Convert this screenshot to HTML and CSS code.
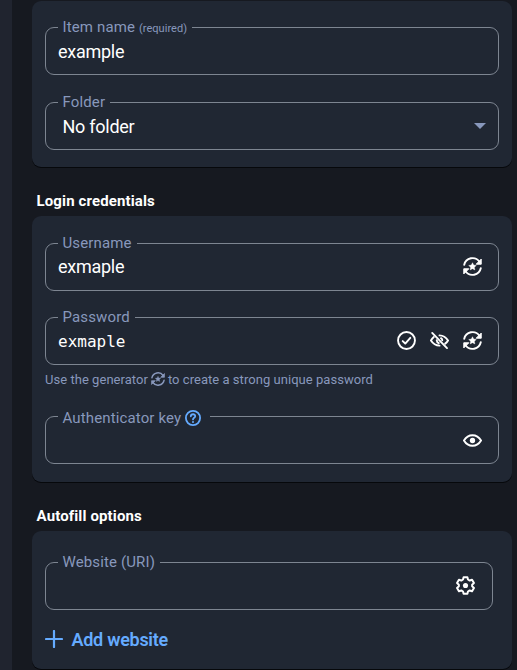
FILE: index.html
```html
<!DOCTYPE html>
<html lang="en">
<head>
<meta charset="utf-8">
<title>Edit login</title>
<link rel="stylesheet" href="styles.css">
</head>
<body>
<svg class="sprite" aria-hidden="true">
  <symbol id="generate" viewBox="0 0 20 20">
    <path d="M1.3 8.2A8.9 8.9 0 0 1 17.3 5M18.7 11.8A8.9 8.9 0 0 1 2.7 15" fill="none" stroke="currentColor" stroke-width="2" stroke-linecap="round"/>
    <path d="M19.2 2.2V7.6H13.8ZM.8 17.8V12.4H6.2Z" fill="currentColor" stroke="currentColor" stroke-width="1" stroke-linejoin="round"/>
    <path d="M10 6l1.25 2.5 2.75.4-2 1.95.48 2.75L10 12.3l-2.48 1.3L8 10.85 6 8.9l2.75-.4Z" fill="currentColor" stroke="currentColor" stroke-width=".4"/>
  </symbol>
  <symbol id="check" viewBox="0 0 20 20">
    <g fill="none" stroke="currentColor" stroke-width="2" stroke-linecap="round" stroke-linejoin="round"><circle cx="10" cy="10" r="8.9"/><path d="M6 10.6l2.7 2.6 5.3-6"/></g>
  </symbol>
  <symbol id="eye" viewBox="0 0 20 20">
    <path d="M1 10C5.4 2.6 14.6 2.6 19 10C14.6 17.4 5.4 17.4 1 10Z" fill="none" stroke="currentColor" stroke-width="2" stroke-linejoin="round"/><circle cx="10" cy="10" r="2.8" fill="currentColor"/>
  </symbol>
  <symbol id="eye-off" viewBox="0 0 20 20">
    <g fill="none" stroke="currentColor" stroke-width="2" stroke-linecap="round" stroke-linejoin="round"><path d="M2.3 2l15.6 16"/><path d="M4 6.4Q2.2 8 1 10Q4.3 15.2 10 15.4M10 4.6Q15.7 4.8 19 10Q17.8 12 16 13.3M7.1 9.6Q7.2 12 9.2 12.8M11.6 7.5Q13 8.3 12.9 9.8"/></g>
  </symbol>
  <symbol id="gear" viewBox="0 0 20 20">
    <path d="M8 1.2h4l.6 2.5 1.8 1.1 2.5-.8 2 3.4L17 9.1v1.8l1.9 1.7-2 3.4-2.5-.8-1.8 1.1-.6 2.5H8l-.6-2.5-1.8-1.1-2.5.8-2-3.4L3 10.9V9.1L1.1 7.4l2-3.4 2.5.8 1.8-1.1Z" fill="none" stroke="currentColor" stroke-width="2.1" stroke-linejoin="round"/><circle cx="10" cy="10" r="2.7" fill="currentColor"/>
  </symbol>
  <symbol id="help" viewBox="0 0 16 16">
    <g fill="none" stroke="currentColor" stroke-width="1.8" stroke-linecap="round"><circle cx="8" cy="8" r="7.1"/><path d="M5.8 6.3C5.9 3.5 10.3 3.6 10.2 6.2C10.1 7.8 8 7.7 8 9.4"/></g><circle cx="8" cy="11.9" r="1" fill="currentColor"/>
  </symbol>
  <symbol id="plus" viewBox="0 0 18 18">
    <path d="M9 1v16M1 9h16" stroke="currentColor" stroke-width="2.2" stroke-linecap="round"/>
  </symbol>
</svg>
<div class="page">
  <aside class="rail"></aside>
  <main class="content">
    <section class="panel panel-item">
      <div class="field">
        <label class="label">Item name <small>(required)</small></label>
        <span class="value">example</span>
      </div>
      <div class="field select">
        <label class="label">Folder</label>
        <span class="value">No folder</span>
        <span class="caret"></span>
      </div>
    </section>

    <h2>Login credentials</h2>
    <section class="panel panel-login">
      <div class="field username">
        <label class="label">Username</label>
        <span class="value">exmaple</span>
        <div class="actions"><svg><use href="#generate"/></svg></div>
      </div>
      <div class="field">
        <label class="label">Password</label>
        <span class="value mono">exmaple</span>
        <div class="actions"><svg><use href="#check"/></svg><svg><use href="#eye-off"/></svg><svg><use href="#generate"/></svg></div>
      </div>
      <p class="hint"><span>Use the generator</span><svg><use href="#generate"/></svg><span>to create a strong unique password</span></p>
      <div class="field authenticator">
        <label class="label label-help">Authenticator key <svg><use href="#help"/></svg></label>
        <div class="actions"><svg><use href="#eye"/></svg></div>
      </div>
    </section>

    <h2>Autofill options</h2>
    <section class="panel panel-autofill">
      <div class="field website">
        <label class="label">Website (URI)</label>
        <div class="actions"><svg><use href="#gear"/></svg></div>
      </div>
      <a class="add"><svg><use href="#plus"/></svg><span>Add website</span></a>
    </section>
  </main>
</div>
</body>
</html>
```
FILE: styles.css
```css
* { box-sizing: border-box; }
body {
  margin: 0;
  height: 670px;
  overflow: hidden;
  background: #161920;
  color: #fff;
  font-family: Roboto, sans-serif;
}
.sprite { display: none; }
.page { display: flex; height: 670px; }
.rail { width: 12px; background: #20242f; }
.content { width: 500px; padding: 1px 0 0 20px; }
.panel {
  width: 480px;
  padding: 26px 13px 0;
  border-radius: 9px;
  background: #202733;
  box-shadow: 0 1px 0 #06080b;
}
.panel-item { height: 166px; }
.panel-login { height: 266px; }
.panel-autofill { height: 138px; padding-top: 31px; }
h2 {
  height: 49px;
  margin: 0;
  padding: 22px 0 0 4.5px;
  font-size: 15px;
  line-height: 24px;
  font-weight: 700;
  letter-spacing: .13px;
}
.panel-login { padding-top: 27px; }
.field {
  position: relative;
  display: flex;
  align-items: center;
  height: 48px;
  padding: 0 16px 0 12px;
  border: 1px solid #7d8591;
  border-radius: 9px;
}
.select { margin-top: 27px; padding: 0 12px 0 16.5px; }
.username { margin-bottom: 26px; }
.website { width: 448px; padding-right: 17px; }
.label {
  position: absolute;
  top: -11px;
  left: 12px;
  padding: 0 5px 0 4.5px;
  background: #202733;
  color: #8898bc;
  font-size: 15px;
  line-height: 20px;
  letter-spacing: .13px;
  white-space: nowrap;
}
.label small { font-size: 11px; letter-spacing: .05px; }
.label-help { top: -9px; display: flex; align-items: center; gap: 4px; padding-right: 9px; }
.label-help svg { width: 16px; height: 16px; color: #65abff; }
.value { font-size: 18px; line-height: 24px; letter-spacing: -.26px; }
.panel-item .value { padding-top: 2px; }
.mono { padding-top: 1px; font-family: "DejaVu Sans Mono", monospace; font-size: 16px; letter-spacing: 0; }
.caret {
  margin-left: auto;
  border: 6px solid transparent;
  border-top-color: #8898bc;
  border-bottom: 0;
}
.actions { display: flex; gap: 14px; margin-left: auto; padding-bottom: 1px; }
.authenticator .actions { padding: 1px 0 0; }
.actions svg { width: 19px; height: 19px; }
.hint {
  display: flex;
  align-items: center;
  gap: 3px;
  height: 18px;
  margin: 5px 0 28px;
  color: #8898bc;
  font-size: 13px;
  letter-spacing: .04px;
  white-space: nowrap;
}
.hint svg { width: 14px; height: 14px; }
.add {
  display: flex;
  align-items: center;
  gap: 8.5px;
  height: 24px;
  margin-top: 17px;
  color: #65abff;
  font-size: 18px;
  font-weight: 600;
  letter-spacing: -.28px;
}
.add svg { width: 18px; height: 18px; }
```
